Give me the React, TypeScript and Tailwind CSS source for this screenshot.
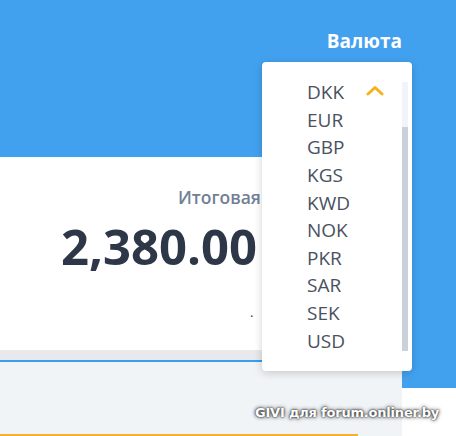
import React from 'react';

const currencies = ['DKK', 'EUR', 'GBP', 'KGS', 'KWD', 'NOK', 'PKR', 'SAR', 'SEK', 'USD'];

const App: React.FC = () => {
  return (
    <div className="relative w-[456px] h-[436px] overflow-hidden bg-white font-['Open_Sans',sans-serif]">
      {/* header */}
      <div className="h-[157px] bg-[#42a1ef] flex justify-end pr-[54px]">
        <div className="pt-[29px] text-[19px] font-bold text-white leading-6 whitespace-nowrap">Валюта</div>
      </div>

      <div className="flex">
        {/* main column */}
        <div className="w-[402px] flex flex-col">
          <div className="h-[193px] bg-white flex flex-col pl-[178px] pt-[30px]">
            <div className="text-[17.5px] font-semibold text-[#718096] leading-5 whitespace-nowrap">Итоговая стоимость</div>
            <div className="-ml-[117px] mt-[11px] text-[49px] font-bold text-[#2d3748] leading-[56px] whitespace-nowrap">2,380.00 ₽</div>
            <div className="ml-[72px] mt-[30px] text-[13px] text-[#2d3748] leading-4">.</div>
          </div>
          <div className="h-[10px] bg-[#e8e9ec]" />
          <div className="h-[2px] bg-[#3b9cf0]" />
          <div className="h-[74px] bg-[#f1f4f7] flex flex-col justify-end">
            <div className="h-[2px] w-[358px] bg-[#f5b031]" />
          </div>
        </div>
        {/* right strip */}
        <div className="flex-1 flex flex-col">
          <div className="h-[231px] bg-[#42a1ef]" />
          <div className="flex-1 bg-white" />
        </div>
      </div>

      {/* dropdown */}
      <div className="absolute left-[262px] top-[62px] w-[150px] h-[309px] bg-white rounded-[4px] shadow-[0_2px_8px_rgba(0,0,0,0.18)] flex">
        <div className="flex-1 flex flex-col pt-[17px] pl-[45px]">
          {currencies.map((c, i) => (
            <div key={c} className="h-[27.6px] flex items-center text-[19px] text-[#4a5160] leading-none">
              <span className="w-[58px]">{c}</span>
              {i === 0 && (
                <svg width="18" height="11" viewBox="0 0 18 11" className="ml-[1px] -mt-[4px]">
                  <path d="M2 9 L9 2.5 L16 9" fill="none" stroke="#f6b21b" strokeWidth="3" strokeLinecap="round" strokeLinejoin="round" />
                </svg>
              )}
            </div>
          ))}
        </div>
        <div className="w-[6px] mr-[4px] mt-[20px] mb-[20px] bg-[#f1f5f9] flex flex-col justify-end">
          <div className="h-[224px] bg-[#cbd1db]" />
        </div>
      </div>

      {/* watermark */}
      <div className="absolute left-[255px] top-[403px] text-[13px] font-bold text-white font-['DejaVu_Sans',sans-serif] tracking-[-0.2px] [text-shadow:0_0_4px_#222,0_0_2px_#000] whitespace-nowrap">
        GIVI для forum.onliner.by
      </div>
    </div>
  );
};

export default App;
